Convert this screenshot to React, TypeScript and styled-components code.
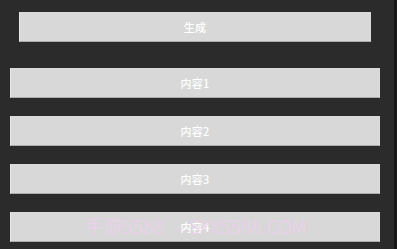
import React from "react";
import styled, { createGlobalStyle } from "styled-components";

const Global = createGlobalStyle`
  html, body { margin: 0; padding: 0; background: #2b2b2b; }
  body { font-family: "Noto Sans CJK SC", "Noto Sans", sans-serif; }
`;

const Screen = styled.div`
  position: relative;
  display: flex;
  width: 397px;
  height: 249px;
  overflow: hidden;
  background: #2b2b2b;
`;

const Main = styled.div`
  flex: 1;
  display: flex;
  flex-direction: column;
  padding-top: 12px;
`;

const Edge = styled.div`
  width: 3px;
  background: #171717;
`;

const Button = styled.div<{ $inset: number; $insetRight: number }>`
  box-sizing: border-box;
  height: 30px;
  margin: 0 ${(p) => p.$insetRight}px 0 ${(p) => p.$inset}px;
  background: #d7d8d7;
  border: 1px solid #d9dad9;
  border-bottom-color: #a9aaa9;
  border-left-color: #e6e7e6;
  display: flex;
  align-items: center;
  justify-content: center;
  color: #ffffff;
  font-size: 11px;
  font-weight: 500;
  letter-spacing: 0.2px;
`;

const List = styled.div`
  display: flex;
  flex-direction: column;
  gap: 18px;
  margin-top: 26px;
`;

const Watermark = styled.div`
  position: absolute;
  left: 85px;
  top: 213px;
  font-family: "Noto Sans CJK SC", "Noto Sans", sans-serif;
  font-size: 19px;
  line-height: 26px;
  color: rgba(238, 208, 238, 0.85);
  white-space: nowrap;
  pointer-events: none;
  letter-spacing: -0.3px;
`;

const Dot = styled.span`
  margin: 0 2px 0 10px;
  font-size: 14px;
`;

export default function App() {
  const items = ["内容1", "内容2", "内容3", "内容4"];
  return (
    <Screen>
      <Global />
      <Main>
        <Button $inset={19} $insetRight={23}>生成</Button>
        <List>
          {items.map((t) => (
            <Button key={t} $inset={10} $insetRight={14}>
              {t}
            </Button>
          ))}
        </List>
      </Main>
      <Edge />
      <Watermark>
        手游5588<Dot>•</Dot>SYX5588.COM
      </Watermark>
    </Screen>
  );
}
